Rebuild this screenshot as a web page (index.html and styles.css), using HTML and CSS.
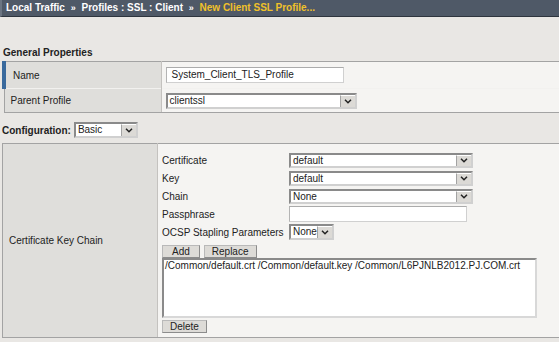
FILE: index.html
```html
<html>
<head>
    <link rel="stylesheet" href="styles.css">
</head>
<body>
    <div class="breadcrumb">
        Local Traffic <span class="sep">&raquo;</span> Profiles : SSL : Client <span class="sep">&raquo;</span> <span class="current">New Client SSL Profile...</span>
    </div>

    <div class="section-title">General Properties</div>
    <table class="props">
        <tr class="first">
            <td class="label active">Name</td>
            <td class="value">
                <div class="text-input name-input">System_Client_TLS_Profile</div>
            </td>
        </tr>
        <tr>
            <td class="label">Parent Profile</td>
            <td class="value">
                <div class="select parent-select">
                    <span class="select-text">clientssl</span>
                    <span class="arrow"><svg width="8" height="5" viewBox="0 0 8 5"><path d="M1 0.8 L4 3.8 L7 0.8" fill="none" stroke="#222" stroke-width="1.5"/></svg></span>
                </div>
            </td>
        </tr>
    </table>

    <div class="config-bar">
        <span class="config-label">Configuration:</span>
        <div class="select config-select">
            <span class="select-text">Basic</span>
            <span class="arrow"><svg width="8" height="5" viewBox="0 0 8 5"><path d="M1 0.8 L4 3.8 L7 0.8" fill="none" stroke="#222" stroke-width="1.5"/></svg></span>
        </div>
    </div>

    <table class="props config">
        <tr class="first">
            <td class="label chain-label">Certificate Key Chain</td>
            <td class="value chain-value">
                <div class="chain-grid">
                    <span>Certificate</span>
                    <div class="select wide-select">
                        <span class="select-text">default</span>
                        <span class="arrow"><svg width="8" height="5" viewBox="0 0 8 5"><path d="M1 0.8 L4 3.8 L7 0.8" fill="none" stroke="#222" stroke-width="1.5"/></svg></span>
                    </div>
                    <span>Key</span>
                    <div class="select wide-select">
                        <span class="select-text">default</span>
                        <span class="arrow"><svg width="8" height="5" viewBox="0 0 8 5"><path d="M1 0.8 L4 3.8 L7 0.8" fill="none" stroke="#222" stroke-width="1.5"/></svg></span>
                    </div>
                    <span>Chain</span>
                    <div class="select wide-select">
                        <span class="select-text">None</span>
                        <span class="arrow"><svg width="8" height="5" viewBox="0 0 8 5"><path d="M1 0.8 L4 3.8 L7 0.8" fill="none" stroke="#222" stroke-width="1.5"/></svg></span>
                    </div>
                    <span>Passphrase</span>
                    <div class="text-input pass-input"></div>
                    <span>OCSP Stapling Parameters</span>
                    <div class="select ocsp-select">
                        <span class="select-text">None</span>
                        <span class="arrow"><svg width="8" height="5" viewBox="0 0 8 5"><path d="M1 0.8 L4 3.8 L7 0.8" fill="none" stroke="#222" stroke-width="1.5"/></svg></span>
                    </div>
                </div>
                <div class="buttons">
                    <button class="btn add-btn">Add</button>
                    <button class="btn">Replace</button>
                </div>
                <div class="chain-list">/Common/default.crt /Common/default.key /Common/L6PJNLB2012.PJ.COM.crt</div>
                <div class="buttons delete-row">
                    <button class="btn">Delete</button>
                </div>
            </td>
        </tr>
    </table>
</body>
</html>
```

FILE: styles.css
```css
body {
    margin: 0;
    background-color: #e9e7e4;
    font-family: "Liberation Sans", Arial, sans-serif;
    font-size: 10px;
    color: #222;
    overflow: hidden;
}

table {
    font-size: inherit;
}

.breadcrumb {
    height: 16px;
    line-height: 16px;
    background-color: #4f5967;
    border-left: 2px solid #6b7582;
    border-bottom: 1px solid #2e353e;
    color: #fff;
    font-weight: bold;
    padding-left: 4px;
    white-space: nowrap;
}

.breadcrumb .sep {
    font-size: 9px;
    margin: 0 3px;
}

.breadcrumb .current {
    color: #f0c12a;
}

.section-title {
    font-weight: bold;
    padding: 30px 0 2px 3px;
    line-height: 12px;
}

.props {
    border-collapse: collapse;
    margin-left: 2px;
    width: 557px;
}

.props td {
    padding: 0;
    vertical-align: middle;
}

.props tr.first td {
    border-top: 1px solid #a3a3a3;
}

.props tr:last-child td {
    border-bottom: 1px solid #a3a3a3;
}

.props tr + tr td {
    border-top: 1px solid #f2f1ef;
}

.label {
    width: 150px;
    background-color: #dfdedb;
    border-left: 1px solid #a3a3a3;
    border-right: 1px solid #c4c2bf;
    padding-left: 6px !important;
    height: 24px;
}

.label.active {
    border-left: 4px solid #3a6a9d;
    padding-left: 7px !important;
    width: 147px;
    height: 27px;
}

.value {
    background-color: #f5f4f2;
    padding-left: 4px !important;
}

.text-input {
    box-sizing: border-box;
    background: #fff;
    border: 1px solid #d0d0d0;
    border-top-color: #ababab;
    border-left-color: #b4b4b4;
    height: 16px;
    line-height: 14px;
    padding-left: 5px;
}

.name-input {
    width: 178px;
}

.select {
    box-sizing: border-box;
    display: flex;
    align-items: stretch;
    background: #fff;
    border: 2px solid #8a8a8a;
    border-bottom-color: #d0d0d0;
    border-right-color: #d0d0d0;
    height: 16px;
}

.select-text {
    flex: 1;
    line-height: 12px;
    padding-left: 2px;
    overflow: hidden;
}

.arrow {
    width: 14px;
    display: flex;
    align-items: center;
    justify-content: center;
    background: #dcdad6;
    border-left: 1px solid #a3a3a3;
    border-top: 1px solid #fff;
}

.parent-select {
    width: 191px;
}

.config-bar {
    display: flex;
    align-items: center;
    padding: 9px 0 5px 2px;
}

.config-label {
    font-weight: bold;
    margin-right: 3px;
}

.config-select {
    width: 64px;
}

.config .label {
    width: 148px;
}

.chain-label {
    height: 194px;
}

.chain-value {
    padding: 8px 0 4px 4px !important;
    vertical-align: top !important;
}

.chain-grid {
    display: grid;
    grid-template-columns: 127px auto;
    grid-auto-rows: 16px;
    row-gap: 2px;
    align-items: center;
    justify-items: start;
}

.chain-grid > span {
    white-space: nowrap;
}

.wide-select {
    width: 184px;
    height: 15px;
}

.pass-input {
    width: 178px;
}

.ocsp-select {
    width: 45px;
}

.buttons {
    display: flex;
    gap: 4px;
    margin-top: 5px;
}

.btn {
    font-family: "Liberation Sans", Arial, sans-serif;
    font-size: 10px;
    line-height: 10px;
    padding: 0 7px;
    height: 13px;
    background-color: #dddbd7;
    border: 1px solid #8c8c8c;
    border-top-color: #b9b9b9;
    border-left-color: #b9b9b9;
    color: #222;
    border-radius: 0;
}

.add-btn {
    padding: 0 9px;
}

.chain-list {
    box-sizing: border-box;
    width: 375px;
    height: 60px;
    background: #fff;
    border: 2px solid #8a8a8a;
    border-bottom-color: #d8d8d8;
    border-right-color: #d8d8d8;
    padding-left: 1px;
    line-height: 12px;
    white-space: nowrap;
}

.delete-row {
    margin-top: 2px;
}
```
